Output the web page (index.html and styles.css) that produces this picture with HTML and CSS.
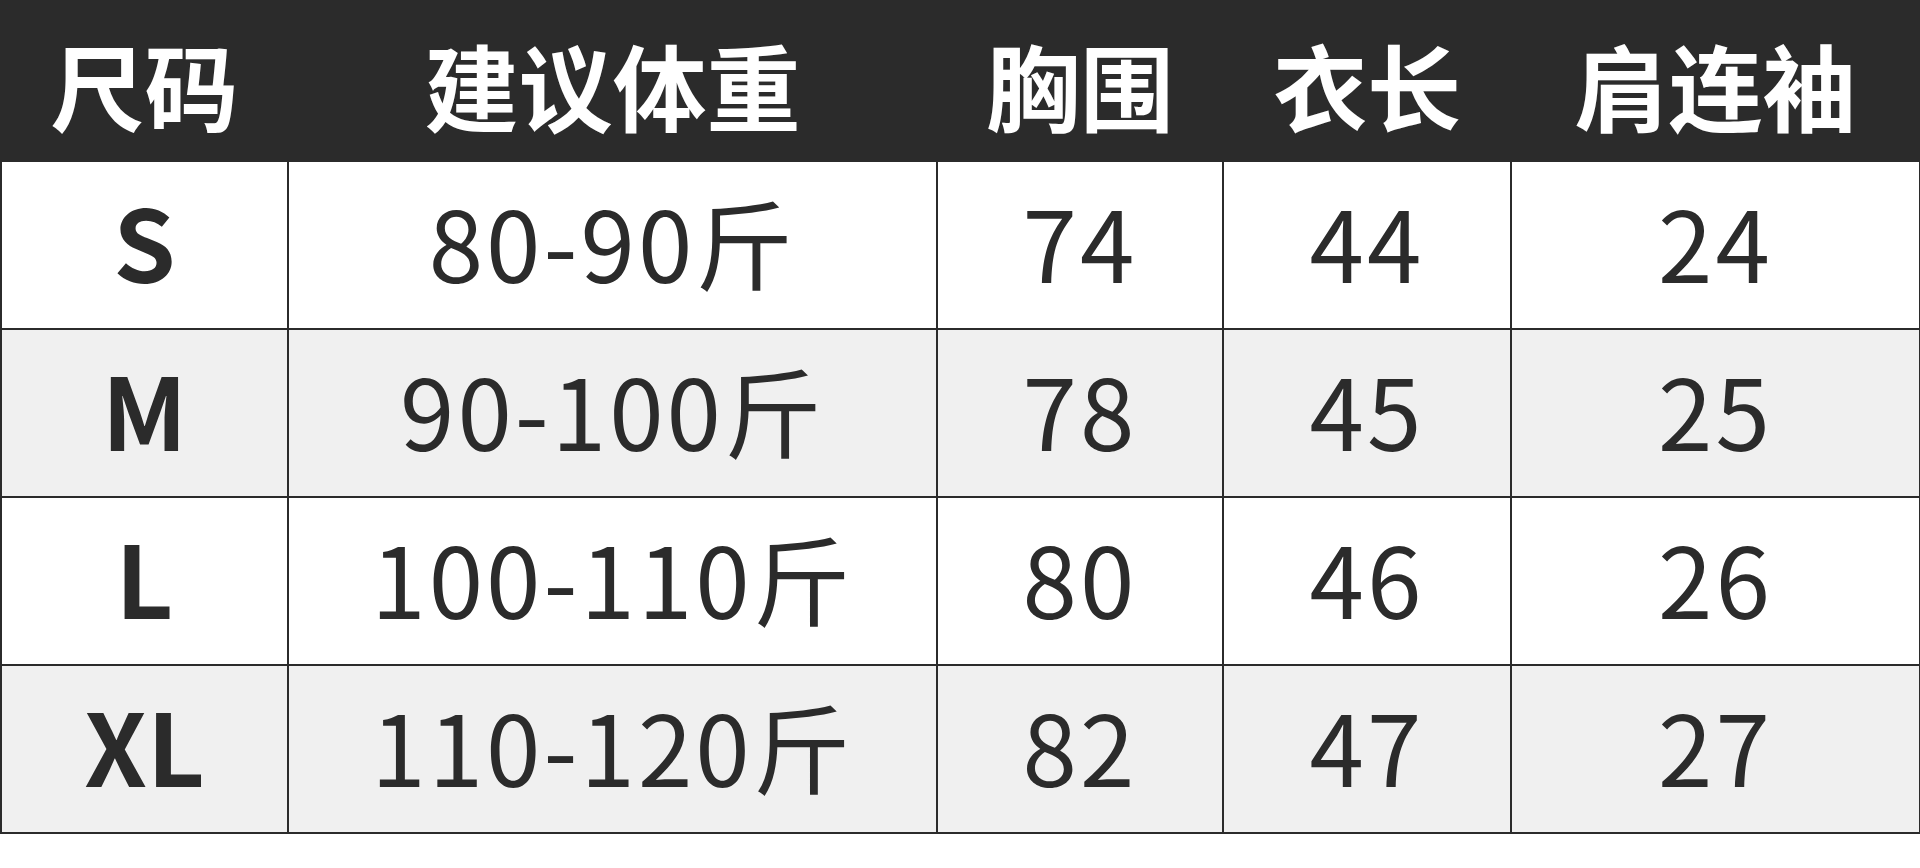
FILE: index.html
```html
<!DOCTYPE html>
<html lang="zh-CN">
<head>
<meta charset="utf-8">
<title>尺码表</title>
<link rel="stylesheet" href="styles.css">
</head>
<body>
<table class="size-table">
  <colgroup>
    <col class="c1"><col class="c2"><col class="c3"><col class="c4"><col class="c5">
  </colgroup>
  <thead>
    <tr class="head-row">
      <th>尺码</th>
      <th>建议体重</th>
      <th>胸围</th>
      <th>衣长</th>
      <th>肩连袖</th>
    </tr>
  </thead>
  <tbody>
    <tr class="row">
      <td class="size">S</td><td>80-90斤</td><td>74</td><td>44</td><td>24</td>
    </tr>
    <tr class="row alt">
      <td class="size">M</td><td>90-100斤</td><td>78</td><td>45</td><td>25</td>
    </tr>
    <tr class="row">
      <td class="size">L</td><td>100-110斤</td><td>80</td><td>46</td><td>26</td>
    </tr>
    <tr class="row alt">
      <td class="size">XL</td><td>110-120斤</td><td>82</td><td>47</td><td>27</td>
    </tr>
  </tbody>
</table>
</body>
</html>
```

FILE: styles.css
```css
html, body {
  margin: 0;
  padding: 0;
  background: #ffffff;
}

.size-table {
  border-collapse: collapse;
  table-layout: fixed;
  width: 1919px;
  font-family: "Noto Sans CJK SC", "Noto Sans", sans-serif;
  color: #2b2b2b;
}

.c1 { width: 287px; }
.c2 { width: 649px; }
.c3 { width: 286px; }
.c4 { width: 288px; }
.c5 { width: 409px; }

.head-row th {
  background: #2b2b2b;
  color: #ffffff;
  height: 152px;
  padding: 8px 0 0 0;
  font-size: 94px;
  font-weight: 700;
  line-height: 1;
  text-align: center;
  vertical-align: middle;
  border: 2px solid #2b2b2b;
  border-top: none;
}

.row td {
  height: 156px;
  padding: 0 0 10px 0;
  font-size: 98px;
  font-weight: 400;
  letter-spacing: 3px;
  line-height: 1;
  text-align: center;
  vertical-align: middle;
  border: 2px solid #2b2b2b;
  background: #ffffff;
}

.row.alt td {
  background: #f0f0f0;
}

.row td.size {
  font-weight: 700;
  font-size: 100px;
  letter-spacing: 0;
}
```
